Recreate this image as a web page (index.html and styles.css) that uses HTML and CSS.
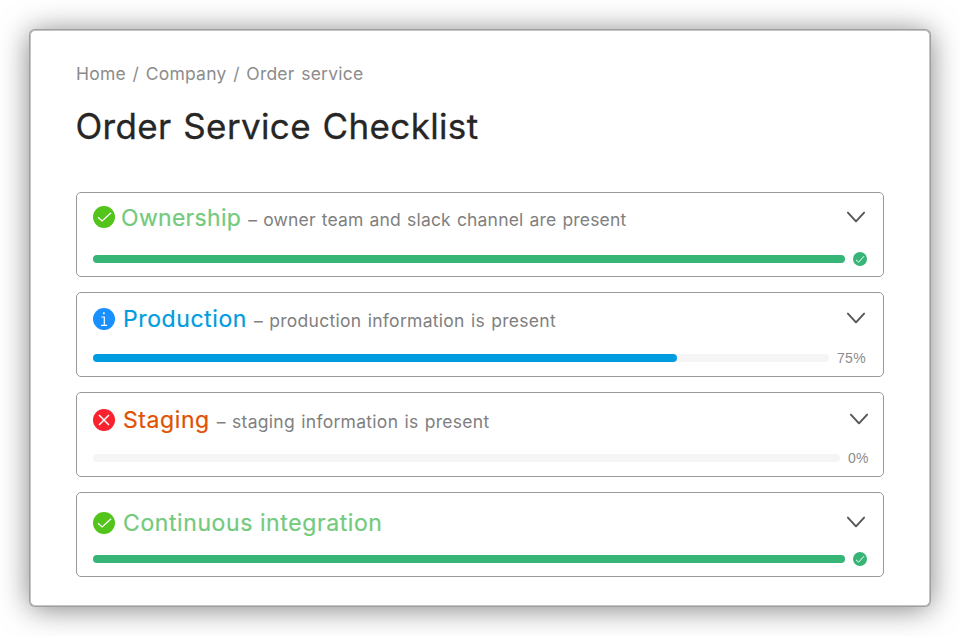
FILE: index.html
```html
<!DOCTYPE html>
<html lang="en">
<head>
<meta charset="utf-8">
<title>Order Service Checklist</title>
<link rel="stylesheet" href="styles.css">
</head>
<body>
<svg class="symbols" width="0" height="0" aria-hidden="true">
  <symbol id="check" viewBox="0 0 22 22"><circle cx="11" cy="11" r="11" fill="currentColor"/><path d="M5 11.3 9.1 14.9 18.1 6.8" fill="none" stroke="#fff" stroke-width="1.3"/></symbol>
  <symbol id="check-small" viewBox="0 0 14 14"><circle cx="7" cy="7" r="7" fill="currentColor"/><path d="M3 7.8 5.6 10.2 11 4.2" fill="none" stroke="#fff" stroke-width="1"/></symbol>
  <symbol id="info" viewBox="0 0 22 22"><circle cx="11" cy="11" r="11" fill="currentColor"/><circle cx="10.9" cy="5.2" r="1" fill="#fff"/><path d="M8.4 9H11.3V17M8.1 17.3H14.1" fill="none" stroke="#fff" stroke-width="1.2"/></symbol>
  <symbol id="cross" viewBox="0 0 22 22"><circle cx="11" cy="11" r="11" fill="currentColor"/><path d="M6 6 16 16M16 6 6 16" fill="none" stroke="#fff" stroke-width="1.5"/></symbol>
  <symbol id="chevron" viewBox="0 0 20 12"><path d="M1.9 1.6 10 10.3 18.1 1.6" fill="none" stroke="#555" stroke-width="1.9" stroke-linecap="round" stroke-linejoin="round"/></symbol>
</svg>
<main class="panel">
  <nav class="breadcrumb">Home / Company / Order service</nav>
  <h1 class="title">Order Service Checklist</h1>
  <div class="list">
    <section class="card ownership">
      <header class="head"><svg class="status"><use href="#check"/></svg><h2 class="name">Ownership</h2><span class="note">– owner team and slack channel are present</span><svg class="chevron"><use href="#chevron"/></svg></header>
      <div class="progress"><div class="track"><div class="fill" style="width:100%"></div></div><svg class="done"><use href="#check-small"/></svg></div>
    </section>
    <section class="card production">
      <header class="head"><svg class="status"><use href="#info"/></svg><h2 class="name">Production</h2><span class="note">– production information is present</span><svg class="chevron"><use href="#chevron"/></svg></header>
      <div class="progress"><div class="track"><div class="fill" style="width:79.35%"></div></div><span class="percent">75%</span></div>
    </section>
    <section class="card staging">
      <header class="head"><svg class="status"><use href="#cross"/></svg><h2 class="name">Staging</h2><span class="note">– staging information is present</span><svg class="chevron"><use href="#chevron"/></svg></header>
      <div class="progress"><div class="track"></div><span class="percent">0%</span></div>
    </section>
    <section class="card integration">
      <header class="head"><svg class="status"><use href="#check"/></svg><h2 class="name">Continuous integration</h2><svg class="chevron"><use href="#chevron"/></svg></header>
      <div class="progress"><div class="track"><div class="fill" style="width:100%"></div></div><svg class="done"><use href="#check-small"/></svg></div>
    </section>
  </div>
</main>
</body>
</html>
```
FILE: styles.css
```css
* { box-sizing: border-box; }
body { margin: 0; padding: 30px; height: 636px; overflow: hidden; background: #fff; font-family: Inter, "Liberation Sans", sans-serif; }
.symbols { display: none; }
.panel { width: 900px; height: 576px; padding: 30px 45px 0; border: 1px solid #c4c4c4; border-radius: 5px; background: #fff; box-shadow: 0 0 0 1px #a0a0a0, 0 2px 30px rgba(0, 0, 0, .52); }
.breadcrumb { height: 26px; line-height: 26px; font-size: 17.5px; letter-spacing: .22px; word-spacing: 1.5px; color: #8c8c8c; white-space: nowrap; }
.title { margin: 17px 0 0 -.5px; height: 44px; line-height: 44px; font-size: 35px; font-weight: 400; letter-spacing: .35px; word-spacing: 1.5px; color: #262626; white-space: nowrap; -webkit-text-stroke: .3px #262626; }
.list { display: grid; gap: 15px; margin-top: 44px; }
.card { height: 85px; padding: 0 15px 0 16px; border: 1px solid #999; border-radius: 5px; display: flex; flex-direction: column; }
.head { display: flex; align-items: center; height: 30px; flex: none; white-space: nowrap; }
.status { width: 22px; height: 22px; flex: none; }
.name { margin: 0 0 0 8px; font-size: 23px; line-height: 30px; font-weight: 400; letter-spacing: .59px; -webkit-text-stroke: .2px currentColor; }
.note { margin-left: 7px; padding-top: 2px; font-size: 17.5px; letter-spacing: .29px; word-spacing: 1px; color: #808080; }
.chevron { width: 20px; height: 12px; margin: 0 2px 2px auto; flex: none; }
.progress { display: flex; align-items: center; height: 16px; margin-top: auto; margin-bottom: 9px; }
.track { flex: 1; height: 8px; border-radius: 4px; background: #f5f5f5; }
.fill { height: 8px; border-radius: 4px; background: #36b577; }
.done { width: 14px; height: 14px; margin-left: 8px; margin-right: 1px; color: #36b577; }
.percent { width: 39px; padding-left: 8px; font: 14px/16px "Liberation Sans", sans-serif; letter-spacing: .3px; color: #8c8c8c; }

.ownership .head { margin-top: 9px; }
.ownership .name { margin-left: 6px; padding-top: 2px; letter-spacing: .3px; }
.ownership .note { padding-top: 4px; letter-spacing: .17px; }
.ownership .chevron { margin-bottom: 0; }
.ownership .status, .integration .status { color: #52c41a; }
.ownership .name, .integration .name { color: #73ca7c; }

.production .head { margin-top: 11px; }
.production .status { color: #1890ff; }
.production .name { color: #009ce0; }
.production .fill { background: #009ce0; }
.production .progress, .staging .progress { margin-bottom: 10px; }

.staging .head { margin-top: 12px; }
.staging .status { color: #f9222e; }
.staging .name { color: #e05200; }
.staging .chevron { margin-right: -1px; }
.staging .percent { width: 28px; }

.integration .head { margin-top: 15px; }
```
